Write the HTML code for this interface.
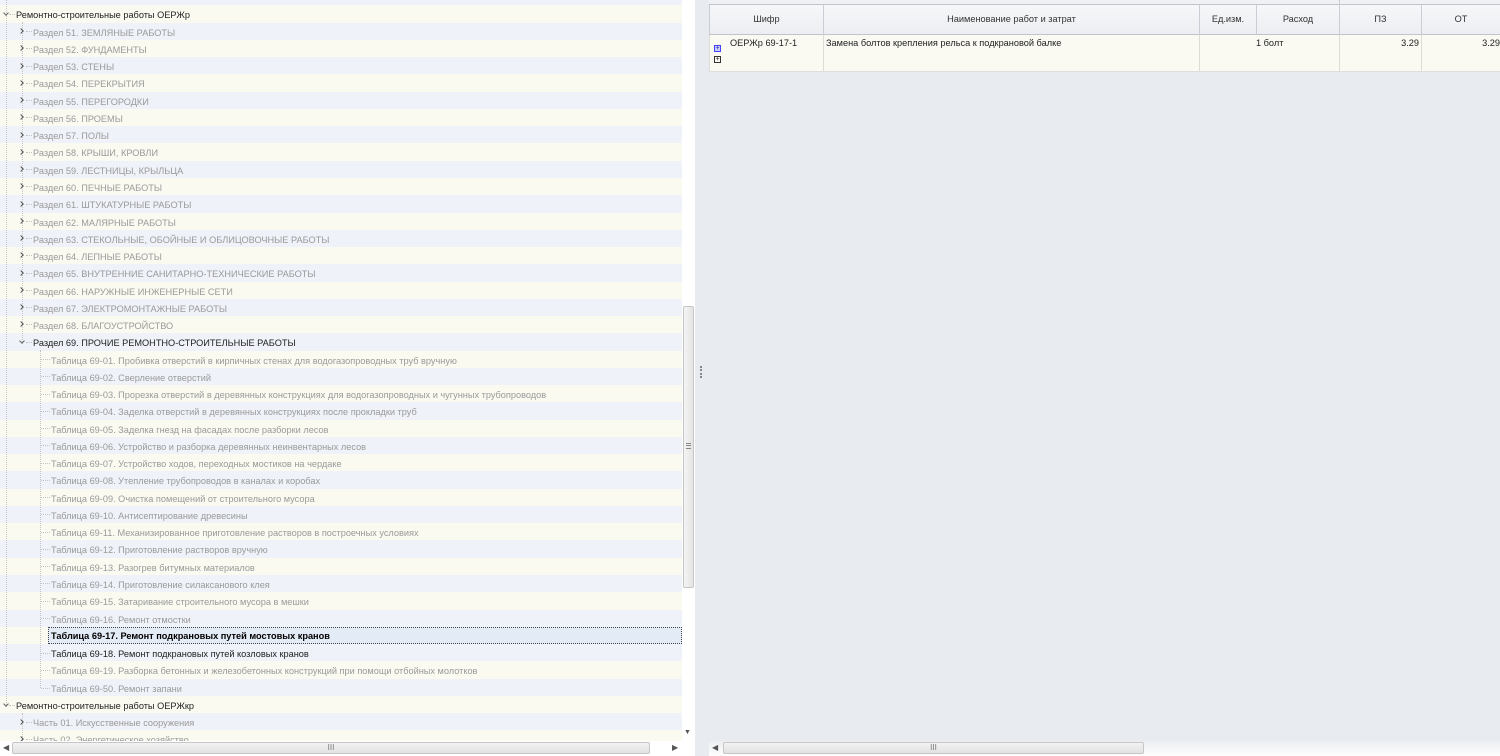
<!DOCTYPE html>
<html><head><meta charset="utf-8"><style>
*{margin:0;padding:0;box-sizing:border-box}
body{width:1500px;height:756px;overflow:hidden;background:#e8ebf0;font-family:Tahoma,"Liberation Sans","DejaVu Sans",sans-serif;font-size:9.2px;position:relative}
#tree{position:absolute;left:0;top:0;width:682px;height:741px;overflow:hidden;background:#fff}
.r{position:absolute;left:0;width:682px;height:17.26px;line-height:20px;white-space:nowrap;color:#9a9a9a}
.c{background:#fafaf1}.b{background:#eff2f9}
.k{color:#222}
.sel{background:#e3ebf6;border:1px dotted #444;left:48px;width:634px;font-weight:bold;color:#000;line-height:17px}
.t{position:absolute}
.vl{position:absolute;border-left:1px dotted #c4c4c4;width:0}
.hl{position:absolute;border-top:1px dotted #c4c4c4;height:0}
.ex{position:absolute;width:4px;height:4px;border-right:1.5px solid #555;border-bottom:1.5px solid #555;transform:rotate(-45deg)}
.ev{position:absolute;width:4px;height:4px;border-right:1.3px solid #666;border-bottom:1.3px solid #666;transform:rotate(45deg)}
#vs{position:absolute;left:682px;top:0;width:13px;height:741px;background:#fff}
#vt{position:absolute;left:683px;top:306px;width:11px;height:282px;background:linear-gradient(90deg,#f4f4f4,#e4e4e4);border:1px solid #c6c6c6;border-radius:2px}
#grid{position:absolute;left:709px;top:0;width:791px}
.hd{position:absolute;top:5px;height:30px;background:linear-gradient(#f6f7f9,#eceef2);border-right:1px solid #c9ced6;border-bottom:1px solid #c0c5cd;text-align:center;line-height:29px;color:#333}
.dc{position:absolute;top:35px;height:37px;background:#fafaf3;border-right:1px solid #dcdcd4;border-bottom:1px solid #dedede;color:#222;line-height:14px;padding-top:1px}
</style></head><body>
<div id="tree">
<div class="r b" style="top:-11.85px"></div>
<div class="r c k" style="top:5.41px"><span class="t" style="left:16px">Ремонтно-строительные работы ОЕРЖр</span></div>
<div class="r b" style="top:22.67px"><span class="t" style="left:33px">Раздел 51. ЗЕМЛЯНЫЕ РАБОТЫ</span></div>
<div class="r c" style="top:39.93px"><span class="t" style="left:33px">Раздел 52. ФУНДАМЕНТЫ</span></div>
<div class="r b" style="top:57.19px"><span class="t" style="left:33px">Раздел 53. СТЕНЫ</span></div>
<div class="r c" style="top:74.45px"><span class="t" style="left:33px">Раздел 54. ПЕРЕКРЫТИЯ</span></div>
<div class="r b" style="top:91.71px"><span class="t" style="left:33px">Раздел 55. ПЕРЕГОРОДКИ</span></div>
<div class="r c" style="top:108.97px"><span class="t" style="left:33px">Раздел 56. ПРОЕМЫ</span></div>
<div class="r b" style="top:126.23px"><span class="t" style="left:33px">Раздел 57. ПОЛЫ</span></div>
<div class="r c" style="top:143.49px"><span class="t" style="left:33px">Раздел 58. КРЫШИ, КРОВЛИ</span></div>
<div class="r b" style="top:160.75px"><span class="t" style="left:33px">Раздел 59. ЛЕСТНИЦЫ, КРЫЛЬЦА</span></div>
<div class="r c" style="top:178.01px"><span class="t" style="left:33px">Раздел 60. ПЕЧНЫЕ РАБОТЫ</span></div>
<div class="r b" style="top:195.27px"><span class="t" style="left:33px">Раздел 61. ШТУКАТУРНЫЕ РАБОТЫ</span></div>
<div class="r c" style="top:212.53px"><span class="t" style="left:33px">Раздел 62. МАЛЯРНЫЕ РАБОТЫ</span></div>
<div class="r b" style="top:229.79px"><span class="t" style="left:33px">Раздел 63. СТЕКОЛЬНЫЕ, ОБОЙНЫЕ И ОБЛИЦОВОЧНЫЕ РАБОТЫ</span></div>
<div class="r c" style="top:247.05px"><span class="t" style="left:33px">Раздел 64. ЛЕПНЫЕ РАБОТЫ</span></div>
<div class="r b" style="top:264.31px"><span class="t" style="left:33px">Раздел 65. ВНУТРЕННИЕ САНИТАРНО-ТЕХНИЧЕСКИЕ РАБОТЫ</span></div>
<div class="r c" style="top:281.57px"><span class="t" style="left:33px">Раздел 66. НАРУЖНЫЕ ИНЖЕНЕРНЫЕ СЕТИ</span></div>
<div class="r b" style="top:298.83px"><span class="t" style="left:33px">Раздел 67. ЭЛЕКТРОМОНТАЖНЫЕ РАБОТЫ</span></div>
<div class="r c" style="top:316.09px"><span class="t" style="left:33px">Раздел 68. БЛАГОУСТРОЙСТВО</span></div>
<div class="r b k" style="top:333.35px"><span class="t" style="left:33px">Раздел 69. ПРОЧИЕ РЕМОНТНО-СТРОИТЕЛЬНЫЕ РАБОТЫ</span></div>
<div class="r c" style="top:350.61px"><span class="t" style="left:51px">Таблица 69-01. Пробивка отверстий в кирпичных стенах для водогазопроводных труб вручную</span></div>
<div class="r b" style="top:367.87px"><span class="t" style="left:51px">Таблица 69-02. Сверление отверстий</span></div>
<div class="r c" style="top:385.13px"><span class="t" style="left:51px">Таблица 69-03. Прорезка отверстий в деревянных конструкциях для водогазопроводных и чугунных трубопроводов</span></div>
<div class="r b" style="top:402.39px"><span class="t" style="left:51px">Таблица 69-04. Заделка отверстий в деревянных конструкциях после прокладки труб</span></div>
<div class="r c" style="top:419.65px"><span class="t" style="left:51px">Таблица 69-05. Заделка гнезд на фасадах после разборки лесов</span></div>
<div class="r b" style="top:436.91px"><span class="t" style="left:51px">Таблица 69-06. Устройство и разборка деревянных неинвентарных лесов</span></div>
<div class="r c" style="top:454.17px"><span class="t" style="left:51px">Таблица 69-07. Устройство ходов, переходных мостиков на чердаке</span></div>
<div class="r b" style="top:471.43px"><span class="t" style="left:51px">Таблица 69-08. Утепление трубопроводов в каналах и коробах</span></div>
<div class="r c" style="top:488.69px"><span class="t" style="left:51px">Таблица 69-09. Очистка помещений от строительного мусора</span></div>
<div class="r b" style="top:505.95px"><span class="t" style="left:51px">Таблица 69-10. Антисептирование древесины</span></div>
<div class="r c" style="top:523.21px"><span class="t" style="left:51px">Таблица 69-11. Механизированное приготовление растворов в построечных условиях</span></div>
<div class="r b" style="top:540.47px"><span class="t" style="left:51px">Таблица 69-12. Приготовление растворов вручную</span></div>
<div class="r c" style="top:557.73px"><span class="t" style="left:51px">Таблица 69-13. Разогрев битумных материалов</span></div>
<div class="r b" style="top:574.99px"><span class="t" style="left:51px">Таблица 69-14. Приготовление силаксанового клея</span></div>
<div class="r c" style="top:592.25px"><span class="t" style="left:51px">Таблица 69-15. Затаривание строительного мусора в мешки</span></div>
<div class="r b" style="top:609.51px"><span class="t" style="left:51px">Таблица 69-16. Ремонт отмостки</span></div>
<div class="r c" style="top:626.77px"></div>
<div class="r sel" style="top:626.77px"><span class="t" style="left:2px">Таблица 69-17. Ремонт подкрановых путей мостовых кранов</span></div>
<div class="r b k" style="top:644.03px"><span class="t" style="left:51px">Таблица 69-18. Ремонт подкрановых путей козловых кранов</span></div>
<div class="r c" style="top:661.29px"><span class="t" style="left:51px">Таблица 69-19. Разборка бетонных и железобетонных конструкций при помощи отбойных молотков</span></div>
<div class="r b" style="top:678.55px"><span class="t" style="left:51px">Таблица 69-50. Ремонт запани</span></div>
<div class="r c k" style="top:695.81px"><span class="t" style="left:16px">Ремонтно-строительные работы ОЕРЖкр</span></div>
<div class="r b" style="top:713.07px"><span class="t" style="left:33px">Часть 01. Искусственные сооружения</span></div>
<div class="r c" style="top:730.33px"><span class="t" style="left:33px">Часть 02. Энергетическое хозяйство</span></div>
<div class="vl" style="left:6px;top:0;height:705px"></div>
<div class="vl" style="left:22px;top:22px;height:320px"></div>
<div class="vl" style="left:22px;top:713px;height:40px"></div>
<div class="vl" style="left:40px;top:350px;height:338px"></div>
<div class="hl" style="left:9px;top:14px;width:6px"></div>
<div class="hl" style="left:9px;top:705px;width:6px"></div>
</div>
<div style="position:absolute;left:0;top:0">
<div class="hl" style="left:26px;top:31px;width:6px"></div><div class="hl" style="left:26px;top:48px;width:6px"></div><div class="hl" style="left:26px;top:66px;width:6px"></div><div class="hl" style="left:26px;top:83px;width:6px"></div><div class="hl" style="left:26px;top:100px;width:6px"></div><div class="hl" style="left:26px;top:117px;width:6px"></div><div class="hl" style="left:26px;top:135px;width:6px"></div><div class="hl" style="left:26px;top:152px;width:6px"></div><div class="hl" style="left:26px;top:169px;width:6px"></div><div class="hl" style="left:26px;top:186px;width:6px"></div><div class="hl" style="left:26px;top:204px;width:6px"></div><div class="hl" style="left:26px;top:221px;width:6px"></div><div class="hl" style="left:26px;top:238px;width:6px"></div><div class="hl" style="left:26px;top:255px;width:6px"></div><div class="hl" style="left:26px;top:273px;width:6px"></div><div class="hl" style="left:26px;top:290px;width:6px"></div><div class="hl" style="left:26px;top:307px;width:6px"></div><div class="hl" style="left:26px;top:324px;width:6px"></div><div class="hl" style="left:26px;top:342px;width:6px"></div><div class="hl" style="left:26px;top:722px;width:6px"></div><div class="hl" style="left:26px;top:739px;width:6px"></div>
<div class="hl" style="left:41px;top:359px;width:9px"></div><div class="hl" style="left:41px;top:376px;width:9px"></div><div class="hl" style="left:41px;top:394px;width:9px"></div><div class="hl" style="left:41px;top:411px;width:9px"></div><div class="hl" style="left:41px;top:428px;width:9px"></div><div class="hl" style="left:41px;top:445px;width:9px"></div><div class="hl" style="left:41px;top:463px;width:9px"></div><div class="hl" style="left:41px;top:480px;width:9px"></div><div class="hl" style="left:41px;top:497px;width:9px"></div><div class="hl" style="left:41px;top:514px;width:9px"></div><div class="hl" style="left:41px;top:532px;width:9px"></div><div class="hl" style="left:41px;top:549px;width:9px"></div><div class="hl" style="left:41px;top:566px;width:9px"></div><div class="hl" style="left:41px;top:583px;width:9px"></div><div class="hl" style="left:41px;top:601px;width:9px"></div><div class="hl" style="left:41px;top:618px;width:9px"></div><div class="hl" style="left:41px;top:653px;width:9px"></div><div class="hl" style="left:41px;top:670px;width:9px"></div><div class="hl" style="left:41px;top:688px;width:9px"></div>
<div class="ev" style="left:4px;top:11px"></div><div class="ev" style="left:4px;top:702px"></div><div class="ev" style="left:20px;top:339px"></div>
<div class="ex" style="left:19px;top:29px"></div><div class="ex" style="left:19px;top:46px"></div><div class="ex" style="left:19px;top:64px"></div><div class="ex" style="left:19px;top:81px"></div><div class="ex" style="left:19px;top:98px"></div><div class="ex" style="left:19px;top:115px"></div><div class="ex" style="left:19px;top:133px"></div><div class="ex" style="left:19px;top:150px"></div><div class="ex" style="left:19px;top:167px"></div><div class="ex" style="left:19px;top:184px"></div><div class="ex" style="left:19px;top:202px"></div><div class="ex" style="left:19px;top:219px"></div><div class="ex" style="left:19px;top:236px"></div><div class="ex" style="left:19px;top:253px"></div><div class="ex" style="left:19px;top:271px"></div><div class="ex" style="left:19px;top:288px"></div><div class="ex" style="left:19px;top:305px"></div><div class="ex" style="left:19px;top:322px"></div><div class="ex" style="left:19px;top:720px"></div><div class="ex" style="left:19px;top:737px"></div>
</div>
<div id="vs"></div><div id="vt"><div style="position:absolute;left:2px;top:136px;width:5px;height:6px;border-top:1px solid #888;border-bottom:1px solid #888"><div style="margin-top:1px;height:2px;border-top:1px solid #888"></div></div></div>
<div style="position:absolute;left:684px;top:729px;font-size:7px;color:#555">▼</div>
<div style="position:absolute;left:700px;top:366px;width:2px;height:12px;border-left:2px dotted #888"></div>
<div style="position:absolute;left:0;top:741px;width:695px;height:15px;background:#fff"></div>
<div style="position:absolute;left:3px;top:743px;font-size:8px;color:#555">◀</div>
<div style="position:absolute;left:12px;top:742px;width:638px;height:12px;background:linear-gradient(#f2f2f2,#e2e2e2);border:1px solid #c6c6c6;border-radius:2px;text-align:center;font-size:8px;line-height:10px;color:#777">III</div>
<div style="position:absolute;left:672px;top:743px;font-size:8px;color:#555">▶</div>
<div id="grid">
<div style="position:absolute;left:0;top:0;width:791px;height:5px;background:#f0f1f4;border-bottom:1px solid #c0c5cd"></div>
<div style="position:absolute;left:630px;top:0;height:5px;border-left:1px solid #c9ced6"></div>
<div class="hd" style="left:0;width:115px;border-left:1px solid #c9ced6">Шифр</div>
<div class="hd" style="left:115px;width:376px">Наименование работ и затрат</div>
<div class="hd" style="left:491px;width:57px">Ед.изм.</div>
<div class="hd" style="left:548px;width:83px">Расход</div>
<div class="hd" style="left:631px;width:82px">ПЗ</div>
<div class="hd" style="left:713px;width:78px;border-right:none">ОТ</div>
<div class="dc" style="left:0;width:115px;border-left:1px solid #dcdcd4;padding-left:20px">ОЕРЖр 69-17-1</div>
<div style="position:absolute;left:5px;top:45px;width:7px;height:7px;border:1px solid #44f;background:#ccf;font-size:7px;line-height:5px;text-align:center;color:#22a">+</div>
<div style="position:absolute;left:5px;top:56px;width:7px;height:7px;border:1px solid #333;font-size:7px;line-height:5px;text-align:center;color:#222">+</div>
<div class="dc" style="left:115px;width:376px;padding-left:2px">Замена болтов крепления рельса к подкрановой балке</div>
<div class="dc" style="left:491px;width:140px;padding-left:56px">1 болт</div>
<div class="dc" style="left:631px;width:82px;text-align:right;padding-right:2px">3.29</div>
<div class="dc" style="left:713px;width:78px;text-align:right;border-right:none">3.29</div>
</div>
<div style="position:absolute;left:709px;top:741px;width:791px;height:15px;background:linear-gradient(#eceef2,#fdfdfc)"></div>
<div style="position:absolute;left:712px;top:743px;font-size:8px;color:#555">◀</div>
<div style="position:absolute;left:723px;top:742px;width:421px;height:12px;background:linear-gradient(#f2f2f2,#e2e2e2);border:1px solid #c6c6c6;border-radius:2px;text-align:center;font-size:8px;line-height:10px;color:#777">III</div>
</body></html>
